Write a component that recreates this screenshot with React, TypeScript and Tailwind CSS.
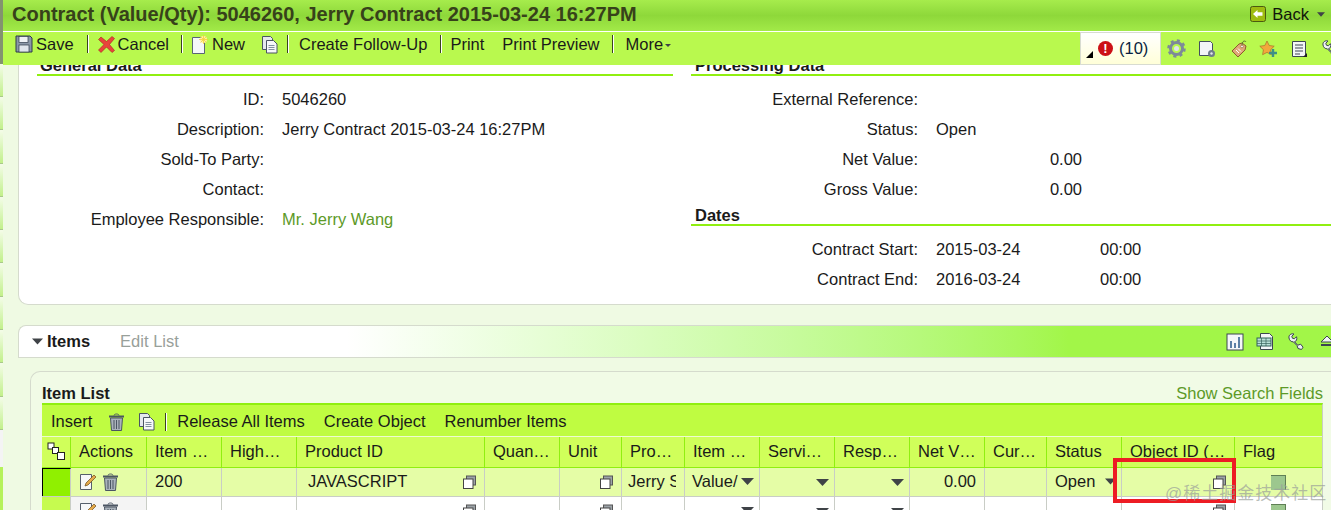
const Floppy = () => (
  <svg width="18" height="18" viewBox="0 0 18 18" className="shrink-0">
    <path d="M1 1h14l2 2v14H1z" fill="#8b98a8" stroke="#2f3a4a" />
    <rect x="4" y="1.500" width="9" height="6" fill="#eef2f6" stroke="#2f3a4a" strokeWidth=".7" />
    <rect x="4" y="10" width="10" height="7" fill="#dfe5ec" stroke="#2f3a4a" strokeWidth=".7" />
  </svg>
);

const RedX = () => (
  <svg width="17" height="17" viewBox="0 0 17 17" className="shrink-0">
    <path d="M3 1l5.500 4.500L14 .5l2.500 2-5 6 5 6-2.500 2L8.500 11 3 16.500l-2.500-2.500L6 8.500 .5 3.500z" fill="#e8443c" stroke="#a8231e" strokeWidth=".6" />
  </svg>
);

const NewPage = () => (
  <svg width="18" height="19" viewBox="0 0 18 19" className="shrink-0">
    <path d="M1.500 2.500h9l3 3v13h-12z" fill="#f5f7fa" stroke="#5a6675" />
    <circle cx="12.500" cy="4.500" r="3.500" fill="#fff3a0" />
    <path d="M12.500 0v9M8 4.500h9M9.500 1.500l6 6M15.500 1.500l-6 6" stroke="#f4cf3a" strokeWidth=".8" />
  </svg>
);

const CopyDoc = () => (
  <svg width="18" height="19" viewBox="0 0 18 19" className="shrink-0">
    <path d="M1.500 1.500h8l2 2v11h-10z" fill="#e5e9ee" stroke="#4b5563" />
    <path d="M5.500 5.500h7l3.500 3.500v9h-10.500z" fill="#f6f8fa" stroke="#4b5563" />
    <path d="M7.500 10.500h6M7.500 12.500h6M7.500 14.500h6" stroke="#8391a1" />
  </svg>
);

const Trash = () => (
  <svg width="17" height="18" viewBox="0 0 17 18" className="shrink-0">
    <path d="M1 3.500h15" stroke="#4b5563" strokeWidth="2" />
    <path d="M6 2.500c0-2 5-2 5 0" fill="none" stroke="#4b5563" />
    <path d="M2.500 5h12l-1 12.500h-10z" fill="#aab2bb" stroke="#4b5563" />
    <path d="M6 7v9M8.500 7v9M11 7v9" stroke="#4b5563" />
  </svg>
);

const EditNote = () => (
  <svg width="18" height="18" viewBox="0 0 18 18" className="shrink-0">
    <path d="M1.500 1.500h11v15h-11z" fill="#f7f8f9" stroke="#565f6b" />
    <path d="M6 13l1-3 8-8 2 2-8 8z" fill="#e4a94a" stroke="#6b4a1a" strokeWidth=".7" />
  </svg>
);

const CopyBox = () => (
  <svg width="15" height="15" viewBox="0 0 15 15" className="shrink-0">
    <rect x="4.500" y="1" width="9" height="9" fill="#9ca3a8" stroke="#555" />
    <rect x="1.500" y="4" width="9.500" height="9.500" fill="#fff" stroke="#444" />
  </svg>
);

const Caret = ({ className = "" }: { className?: string }) => (
  <svg width="13" height="7" viewBox="0 0 13 7" className={`shrink-0 ${className}`}>
    <path d="M0 0h13L6.500 7z" fill="#3f4347" />
  </svg>
);

const Sep = () => <span className="block w-px h-[18px] bg-[#39441f] border-r border-white box-content" />;

const Gear = () => (
  <svg width="19" height="19" viewBox="0 0 19 19" className="shrink-0">
    <circle cx="9.500" cy="9.500" r="6" fill="none" stroke="#7d8a99" strokeWidth="3" />
    <circle cx="9.500" cy="9.500" r="8" fill="none" stroke="#7d8a99" strokeWidth="2.500" strokeDasharray="3 3.300" />
    <circle cx="9.500" cy="9.500" r="2.500" fill="#dfe5ec" />
  </svg>
);

const GearDoc = () => (
  <svg width="18" height="18" viewBox="0 0 18 18" className="shrink-0">
    <path d="M1.500 1.500h11l2 2v12h-13z" fill="#f3f5f8" stroke="#44505e" />
    <circle cx="13.500" cy="13.500" r="3.500" fill="#6f7c8b" />
    <circle cx="13.500" cy="13.500" r="1.200" fill="#e4e8ec" />
  </svg>
);

const Tag = () => (
  <svg width="18" height="18" viewBox="0 0 18 18" className="shrink-0">
    <path d="M12 3l4 3-1 4-7 7-6-6 7-7z" fill="#e0a878" stroke="#8c5a2e" />
    <circle cx="12" cy="6.500" r="1.300" fill="#fff" stroke="#8c5a2e" strokeWidth=".6" />
    <path d="M12 5c0-4 3-5 4-3" fill="none" stroke="#5e7a2e" />
    <path d="M6 10l3 3M8 8.500l3 3" stroke="#fff" />
  </svg>
);

const StarPlus = () => (
  <svg width="19" height="18" viewBox="0 0 19 18" className="shrink-0">
    <path d="M8 1l2.200 4.500 5 .7-3.600 3.500.8 5L8 12.400 3.600 14.700l.8-5L.8 6.200l5-.7z" fill="#f2a93c" stroke="#a8702a" strokeWidth=".7" />
    <path d="M14 9v8M10 13h8" stroke="#3f8f86" strokeWidth="2.400" />
  </svg>
);

const ListDoc = () => (
  <svg width="17" height="18" viewBox="0 0 17 18" className="shrink-0">
    <path d="M1.500 1.500h13v15h-13z" fill="#f4f6f8" stroke="#3c4652" />
    <path d="M4 5h8M4 8h8M4 11h8M4 14h5" stroke="#3c4652" />
    <path d="M16 13v4h-4z" fill="#222" />
  </svg>
);

const Wrench = () => (
  <svg width="16" height="17" viewBox="0 0 16 17" className="shrink-0">
    <path d="M1 5c-.5-3 2-4.800 5-4L3.800 3.200l.6 2 2 .6L8.500 3.700c1 2.500-.3 4.800-2 5l3.200 3.500 3-1 2.300 3-1.500 2.300-3.500-1-1-3-3.700-3.700C3.300 9 1.400 7.500 1 5z" fill="#eef1f4" stroke="#3c4652" />
  </svg>
);

const Chart = () => (
  <svg width="18" height="18" viewBox="0 0 18 18" className="shrink-0">
    <rect x="1" y="1" width="16" height="16" fill="#f4f7fa" stroke="#3c4652" />
    <path d="M5 8v7M9 10v5M13 4v11" stroke="#5a7fa6" strokeWidth="2" />
  </svg>
);

const Sheet = () => (
  <svg width="19" height="19" viewBox="0 0 19 19" className="shrink-0">
    <path d="M4.500 1.500h9l3 3v13h-12z" fill="#f4f6f8" stroke="#3c4652" />
    <rect x="1" y="6" width="14" height="8" fill="#b8e0d8" stroke="#33605a" />
    <path d="M1 9h14M1 11.500h14M5.500 6v8M10 6v8" stroke="#33605a" strokeWidth=".7" />
  </svg>
);

const Eject = () => (
  <svg width="14" height="11" viewBox="0 0 14 11" className="shrink-0">
    <path d="M7 0l6 6H1z" fill="#f2f5f7" stroke="#3c4652" />
    <path d="M1 9h12" stroke="#3c4652" strokeWidth="2" />
  </svg>
);

const BackIcon = () => (
  <svg width="16" height="16" viewBox="0 0 16 16" className="shrink-0">
    <rect x=".5" y=".5" width="15" height="15" rx="2" fill="#9ebc10" stroke="#4a5a10" />
    <path d="M3 8l4.500-4v2.200h5v3.600h-5V12z" fill="#fff" />
  </svg>
);

const Field = ({ label, children }: { label: string; children?: React.ReactNode }) => (
  <div className="flex h-[30px] items-center">
    <span className="w-[227px] text-right shrink-0">{label}</span>
    <span className="pl-[18px] flex">{children}</span>
  </div>
);

const cols = [
  { w: "w-[29px]", t: "" },
  { w: "w-[76px]", t: "Actions" },
  { w: "w-[75px]", t: "Item …" },
  { w: "w-[75px]", t: "High…" },
  { w: "w-[188px]", t: "Product ID" },
  { w: "w-[75px]", t: "Quan…" },
  { w: "w-[62px]", t: "Unit" },
  { w: "w-[63px]", t: "Pro…" },
  { w: "w-[75px]", t: "Item …" },
  { w: "w-[75px]", t: "Servi…" },
  { w: "w-[75px]", t: "Resp…" },
  { w: "w-[75px]", t: "Net V…" },
  { w: "w-[62px]", t: "Cur…" },
  { w: "w-[75px]", t: "Status" },
  { w: "w-[113px]", t: "Object ID (…" },
  { w: "w-[87px]", t: "Flag" },
];

const Cell = ({ i, className = "", children }: { i: number; className?: string; children?: React.ReactNode }) => (
  <div className={`${cols[i].w} shrink-0 h-full border-r border-[#c9cdc6] flex items-center ${className}`}>{children}</div>
);

const Row = ({ first }: { first: boolean }) => (
  <div className={`flex h-[29px] border-b border-[#c9cdc6] ${first ? "bg-[#e5fda6]" : "bg-white"}`}>
    <Cell i={0} className={first ? "bg-[#90f000] border-l border-t border-l-black border-t-black" : "bg-[#c6fb4f]"} />
    <Cell i={1} className={`pl-2 gap-[5px] ${first ? "" : "bg-[#f4f4f4]"}`}><EditNote /><Trash /></Cell>
    <Cell i={2} className="pl-2 pb-px">{first && "200"}</Cell>
    <Cell i={3} />
    <Cell i={4} className="pl-[11px] justify-between pr-[7px]"><span className="-mt-0.5">{first && "JAVASCRIPT"}</span><CopyBox /></Cell>
    <Cell i={5} />
    <Cell i={6} className="justify-end pr-[7px]"><CopyBox /></Cell>
    <Cell i={7} className="pl-[6px] pb-px"><span className="w-[48px] overflow-hidden whitespace-nowrap">{first && "Jerry S"}</span></Cell>
    <Cell i={8} className="pl-[7px] justify-between pr-[5px] pb-px whitespace-nowrap">{first && <span>Value/</span>}<Caret className="ml-auto" /></Cell>
    <Cell i={9} className="justify-end pr-[5px]"><Caret /></Cell>
    <Cell i={10} className="justify-end pr-[5px]"><Caret /></Cell>
    <Cell i={11} className="justify-end pr-2 pb-px">{first && "0.00"}</Cell>
    <Cell i={12} />
    <Cell i={13} className="pl-2 justify-between pr-[5px] pb-px">{first && <><span>Open</span><Caret className="w-[11px]" /></>}</Cell>
    <Cell i={14} className="justify-end pr-[7px]"><CopyBox /></Cell>
    <div className="flex-1 flex items-center pl-9">
      <span className="w-[15px] h-[15px] bg-[#9cc78e] border-t border-r border-[#5f7f55]" />
    </div>
  </div>
);

// thin strip of the navigation frame on the far left, cut off by the screenshot
const Strip = () => (
  <div className="w-[3px] shrink-0 flex flex-col">
    <div className="h-[64px] shrink-0 bg-[#83936f]" />
    <div className="h-[33px] shrink-0 border-b border-[#a9c98a] bg-gradient-to-b from-[#f4fce8] to-[#c2f08a]" />
    {[0, 1, 2, 3, 4, 5, 6, 7, 8, 9].map((n) => (
      <div key={n} className="h-[33.300px] shrink-0 border-b border-[#a9c98a] bg-gradient-to-b from-[#f4fce8] to-[#c2f08a]" />
    ))}
    <div className="h-[37px] bg-[#f4f4f4] shrink-0" />
    <div className="flex-1 bg-[#b5f25a]" />
  </div>
);

export default function App() {
  return (
    <div className="relative w-[1331px] h-[510px] overflow-hidden flex bg-[#effae3] text-[16.500px] text-[#1a1a1a] font-['Liberation_Sans',Arial,sans-serif]">
      <Strip />

      <div className="absolute left-[3px] right-0 top-0 z-10 bg-white">
        <div className="h-[31px] flex items-center justify-between pl-[9px] pr-[6px] pb-[3px] bg-gradient-to-b from-[#a6ec4c] via-[#8ed83a] to-[#a2ea48]">
          <h1 className="text-[20px] font-bold text-[#37421a] whitespace-nowrap">Contract (Value/Qty): 5046260, Jerry Contract 2015-03-24 16:27PM</h1>
          <div className="flex items-center text-[#10160a]">
            <BackIcon />
            <span className="ml-[6px]">Back</span>
            <Caret className="w-[8px] ml-[8px]" />
          </div>
        </div>
        <div className="h-[33px] mt-px flex items-center bg-[#b9f94e] pl-[12px] pb-[9px] whitespace-nowrap">
          <Floppy />
          <span className="ml-[3px]">Save</span>
          <span className="ml-[13px]"><Sep /></span>
          <span className="ml-[9px]"><RedX /></span>
          <span className="ml-[3px]">Cancel</span>
          <span className="ml-[12px]"><Sep /></span>
          <span className="ml-[8px]"><NewPage /></span>
          <span className="ml-[3px]">New</span>
          <span className="ml-[16px]"><CopyDoc /></span>
          <span className="ml-[8px]"><Sep /></span>
          <span className="ml-[10px]">Create Follow-Up</span>
          <span className="ml-[13px]"><Sep /></span>
          <span className="ml-[8px]">Print</span>
          <span className="ml-[18px]">Print Preview</span>
          <span className="ml-[12px]"><Sep /></span>
          <span className="ml-[12px]">More</span>
          <Caret className="w-[6px] ml-[2px] mt-0.5" />
          <div className="ml-auto flex items-center -mr-[7px] self-start">
            <div className="relative w-[81px] h-[33px] flex items-center pl-[17px] gap-[6px] bg-gradient-to-b from-white to-[#ffffd8] border border-[#d8dcd0] text-[#0a1f40]">
              <svg width="7" height="7" viewBox="0 0 7 7" className="absolute left-[5px] bottom-[6px]">
                <path d="M7 0v7H0z" fill="#000" />
              </svg>
              <span className="w-[15px] h-[15px] rounded-full bg-[#cc1016] text-white font-bold text-[13px] leading-[15px] text-center">!</span>
              (10)
            </div>
            <span className="ml-[6px]"><Gear /></span>
            <span className="ml-[12px]"><GearDoc /></span>
            <span className="ml-[14px]"><Tag /></span>
            <span className="ml-[11px]"><StarPlus /></span>
            <span className="ml-[13px]"><ListDoc /></span>
            <span className="ml-[14px]"><Wrench /></span>
          </div>
        </div>
      </div>

      <div className="flex-1 min-w-0 pl-[15px] pt-[58px]">
        <div className="h-[247px] bg-white border border-[#d5dbcd] border-r-0 rounded-bl-[10px] pl-[18px]">
          <div className="flex">
            <div className="w-[636px] shrink-0">
              <div className="h-[17px] pl-[3px] border-b-2 border-[#90ef10] font-bold leading-[12px]">General Data</div>
              <div className="pt-[8px]">
                <Field label="ID:">5046260</Field>
                <Field label="Description:">Jerry Contract 2015-03-24 16:27PM</Field>
                <Field label="Sold-To Party:" />
                <Field label="Contact:" />
                <Field label="Employee Responsible:"><span className="text-[#5d9a28]">Mr. Jerry Wang</span></Field>
              </div>
            </div>
            <div className="flex-1 ml-[18px]">
              <div className="h-[17px] pl-[4px] border-b-2 border-[#90ef10] font-bold leading-[12px]">Processing Data</div>
              <div className="pt-[8px]">
                <Field label="External Reference:" />
                <Field label="Status:">Open</Field>
                <Field label="Net Value:"><span className="w-[146px] text-right">0.00</span></Field>
                <Field label="Gross Value:"><span className="w-[146px] text-right">0.00</span></Field>
              </div>
              <div className="h-[22px] pl-[4px] border-b-2 border-[#90ef10] font-bold leading-[22px]">Dates</div>
              <div className="pt-[8px]">
                <Field label="Contract Start:"><span className="w-[164px]">2015-03-24</span>00:00</Field>
                <Field label="Contract End:"><span className="w-[164px]">2016-03-24</span>00:00</Field>
              </div>
            </div>
          </div>
        </div>

        <div className="mt-[20px] h-[33px] flex items-center border border-[#d5dbcd] border-r-0 rounded-tl-[8px] bg-gradient-to-r from-white from-25% to-[#a2f648] to-80% pl-[13px]">
          <Caret className="w-[11px]" />
          <span className="ml-[4px] font-bold">Items</span>
          <span className="ml-[30px] text-[#98a09a]">Edit List</span>
          <div className="ml-auto flex items-center -mr-[3px]">
            <Chart />
            <span className="ml-[12px]"><Sheet /></span>
            <span className="ml-[13px]"><Wrench /></span>
            <span className="ml-[16px]"><Eject /></span>
          </div>
        </div>

        <div className="relative mt-[13px] ml-[12px] bg-[#f1fbe6] border-t border-l border-[#d5dbcd] rounded-tl-[10px] pl-[11px]">
          <div className="w-[1281px] h-[31px] flex items-end justify-between">
            <span className="font-bold leading-[20px]">Item List</span>
            <span className="text-[#5d9a28] leading-[20px]">Show Search Fields</span>
          </div>
          <div className="w-[1281px] border-t-2 border-[#90ef10] border-r border-r-[#c9cdc6]">
            <div className="h-[31px] flex items-center bg-[#bffc41] pl-[9px] pt-[2px] whitespace-nowrap">
              <span>Insert</span>
              <span className="ml-[16px]"><Trash /></span>
              <span className="ml-[13px]"><CopyDoc /></span>
              <span className="ml-[9px]"><Sep /></span>
              <span className="ml-[10px]">Release All Items</span>
              <span className="ml-[19px]">Create Object</span>
              <span className="ml-[19px]">Renumber Items</span>
            </div>
            <div className="flex h-[32px] border-y border-t-[#eefcd0] border-b-[#90ef10] bg-[#d0ff5a] whitespace-nowrap">
              {cols.map((c, i) => (
                <div key={i} className={`${c.w} shrink-0 flex items-center pl-2 pb-[2px] border-r border-[#90ef10] last:border-r-0`}>
                  {i === 0 ? (
                    <svg width="18" height="18" viewBox="0 0 18 18" className="-ml-[3px]">
                      <rect x="1" y="1" width="6" height="6" fill="#fff" stroke="#222" />
                      <rect x="5.500" y="5.500" width="6" height="6" fill="#fff" stroke="#222" />
                      <rect x="10.500" y="10.500" width="7" height="7" fill="#fff" stroke="#222" />
                    </svg>
                  ) : c.t}
                </div>
              ))}
            </div>
            <Row first />
            <Row first={false} />
          </div>
        </div>
      </div>

      <div className="absolute left-[1113px] top-[458px] w-[123px] h-[45px] border-[4px] border-[#ed1c24] z-20" />
      <div className="absolute left-[1165px] top-[481px] z-30 text-[17px] tracking-[1px] text-[#9a9f9a]/70 whitespace-nowrap font-['Liberation_Sans','Noto_Sans_CJK_SC',sans-serif]">@稀土掘金技术社区</div>
    </div>
  );
}
